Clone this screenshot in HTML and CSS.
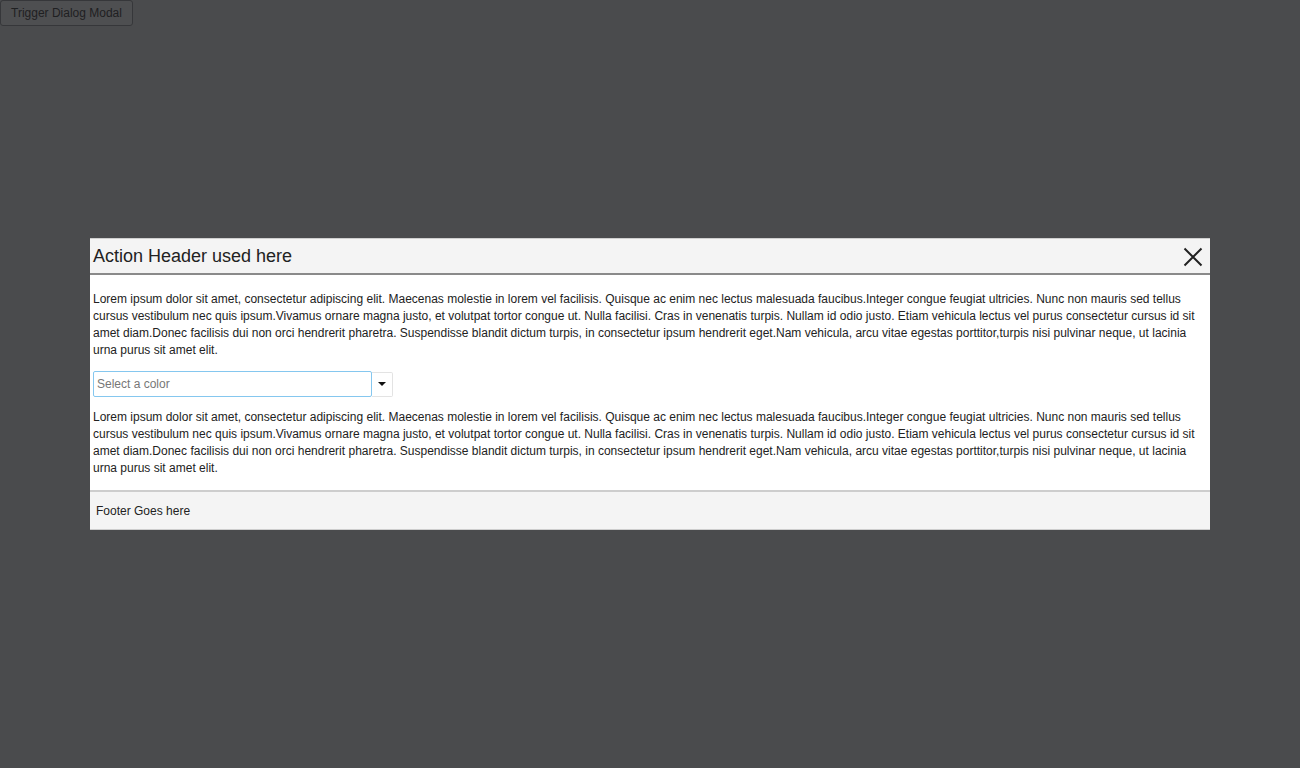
FILE: index.html
```html
<!DOCTYPE html>
<html>
<head>
<meta charset="utf-8">
<link rel="stylesheet" href="styles.css">
</head>
<body>
<button class="trigger">Trigger Dialog Modal</button>
<div class="overlay">
  <div class="dialog">
    <div class="dialog-header">
      <span class="title">Action Header used here</span>
      <svg class="close" width="22" height="22" viewBox="0 0 22 22"><path d="M2.5 2.5 L19.5 19.5 M19.5 2.5 L2.5 19.5" stroke="#222" stroke-width="2" fill="none"/></svg>
    </div>
    <div class="dialog-body">
      <p>Lorem ipsum dolor sit amet, consectetur adipiscing elit. Maecenas molestie in lorem vel facilisis. Quisque ac enim nec lectus malesuada faucibus.Integer congue feugiat ultricies. Nunc non mauris sed tellus cursus vestibulum nec quis ipsum.Vivamus ornare magna justo, et volutpat tortor congue ut. Nulla facilisi. Cras in venenatis turpis. Nullam id odio justo. Etiam vehicula lectus vel purus consectetur cursus id sit amet diam.Donec facilisis dui non orci hendrerit pharetra. Suspendisse blandit dictum turpis, in consectetur ipsum hendrerit eget.Nam vehicula, arcu vitae egestas porttitor,turpis nisi pulvinar neque, ut lacinia urna purus sit amet elit.</p>
      <div class="combo">
        <input class="combo-input" type="text" placeholder="Select a color">
        <span class="combo-btn"><span class="caret"></span></span>
      </div>
      <p>Lorem ipsum dolor sit amet, consectetur adipiscing elit. Maecenas molestie in lorem vel facilisis. Quisque ac enim nec lectus malesuada faucibus.Integer congue feugiat ultricies. Nunc non mauris sed tellus cursus vestibulum nec quis ipsum.Vivamus ornare magna justo, et volutpat tortor congue ut. Nulla facilisi. Cras in venenatis turpis. Nullam id odio justo. Etiam vehicula lectus vel purus consectetur cursus id sit amet diam.Donec facilisis dui non orci hendrerit pharetra. Suspendisse blandit dictum turpis, in consectetur ipsum hendrerit eget.Nam vehicula, arcu vitae egestas porttitor,turpis nisi pulvinar neque, ut lacinia urna purus sit amet elit.</p>
    </div>
    <div class="dialog-footer">Footer Goes here</div>
  </div>
</div>
</body>
</html>
```
FILE: styles.css
```css
html, body {
  margin: 0;
  padding: 0;
  height: 100%;
}
body {
  background: #4a4b4d;
  font-family: "Liberation Sans", Arial, sans-serif;
  font-size: 12px;
}
.trigger {
  display: block;
  margin: 0;
  height: 26px;
  padding: 0 10px;
  background: #4e4f51;
  border: 1px solid #36373a;
  border-radius: 3px;
  color: #1f2022;
  font-family: "Liberation Sans", Arial, sans-serif;
  font-size: 12px;
}
.overlay {
  position: fixed;
  inset: 0;
  display: flex;
  align-items: center;
  justify-content: center;
}
.dialog {
  width: 1120px;
  background: #fff;
  color: #222;
}
.dialog-header {
  display: flex;
  align-items: center;
  justify-content: space-between;
  height: 33px;
  padding: 1px 6px 0 3px;
  box-sizing: content-box;
  background: #f4f4f4;
  border-top: 1px solid #cfcfcf;
  border-bottom: 2px solid #8a8a8a;
}
.title {
  font-size: 18px;
  color: #222;
}
.close {
  display: block;
}
.dialog-body {
  padding: 4px 3px 1px;
}
.dialog-body p {
  margin: 12px 0;
  font-size: 12px;
  line-height: 17px;
}
.combo {
  display: flex;
  align-items: center;
}
.combo-input {
  box-sizing: border-box;
  width: 279px;
  height: 26px;
  margin: 0;
  padding: 0 3px;
  border: 1px solid #85c7ef;
  border-radius: 2px;
  font-family: "Liberation Sans", Arial, sans-serif;
  font-size: 12px;
  outline: none;
  background: #fff;
}
.combo-input::placeholder {
  color: #777;
}
.combo-btn {
  box-sizing: border-box;
  width: 21px;
  height: 25px;
  display: flex;
  align-items: center;
  justify-content: center;
  border: 1px solid #e3e3e3;
  border-left: none;
  border-radius: 0 2px 2px 0;
  background: #fff;
}
.caret {
  width: 0;
  height: 0;
  border-left: 4px solid transparent;
  border-right: 4px solid transparent;
  border-top: 4px solid #111;
}
.dialog-footer {
  height: 37px;
  display: flex;
  align-items: center;
  padding: 0 6px;
  background: #f4f4f4;
  border-top: 2px solid #cdcdcd;
  border-bottom: 1px solid #cdcdcd;
  font-size: 12px;
  color: #222;
}
```
